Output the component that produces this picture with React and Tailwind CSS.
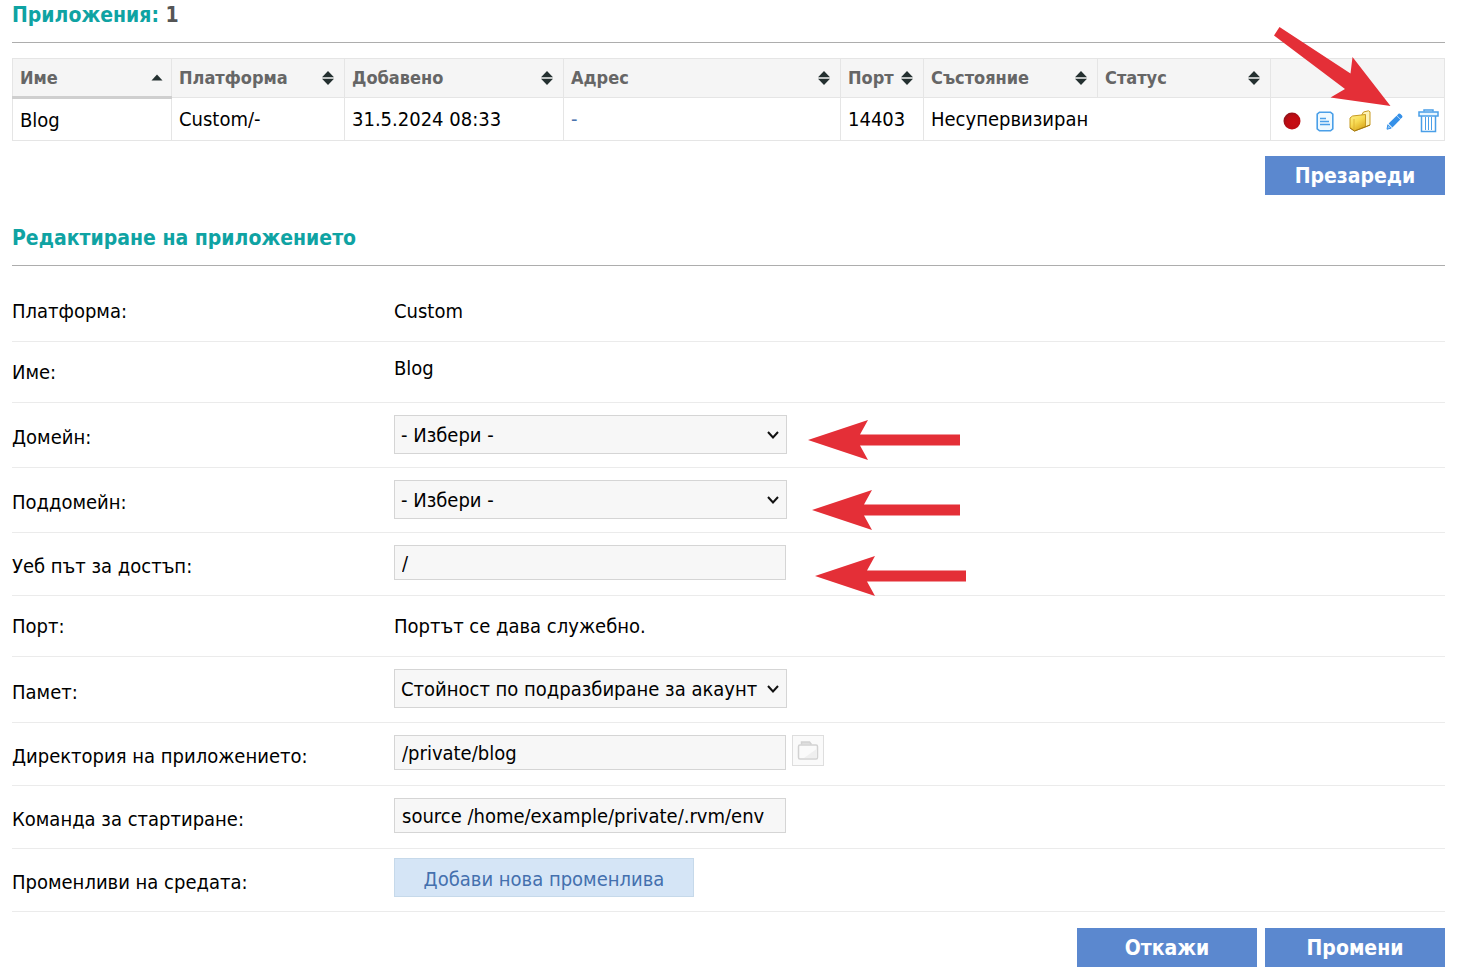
import React, { useState } from 'react';

const columns = [
  { label: 'Платформа', width: 'w-[173px]' },
  { label: 'Добавено', width: 'w-[219px]' },
  { label: 'Адрес', width: '' },
  { label: 'Порт', width: 'w-[83px]' },
  { label: 'Състояние', width: 'w-[174px]' },
  { label: 'Статус', width: 'w-[173px]' },
];

const SortIcon = () => (
  <svg width="12" height="14" viewBox="0 0 12 14" fill="#243030" className="shrink-0" aria-hidden="true">
    <path d="M6 0 12 6.300H0zM0 7.700h12L6 14z" />
  </svg>
);

const SortAscIcon = () => (
  <svg width="12" height="14" viewBox="0 0 12 14" fill="#243030" className="shrink-0" aria-hidden="true">
    <path d="M6 3.500 11.500 9.500H.5z" />
  </svg>
);

const StatusIcon = () => (
  <svg width="18" height="18" viewBox="0 0 18 18" className="block">
    <defs>
      <radialGradient id="status-red" cx="60%" cy="60%" r="60%">
        <stop offset="0" stopColor="#c90d14" />
        <stop offset="0.7" stopColor="#bd0c13" />
        <stop offset="1" stopColor="#96131a" />
      </radialGradient>
    </defs>
    <circle cx="9" cy="9" r="8.500" fill="url(#status-red)" />
  </svg>
);

const LogIcon = () => (
  <svg width="18" height="21" viewBox="0 0 18 21" fill="none" stroke="#4a9fe8" className="block">
    <path d="M3.500 1.200h11l2.300 2v14.600l-2.300 2h-11l-2.300-2V3.200z" strokeWidth="1.600" fill="#eef9ff" />
    <path d="M4 7.500h6M4 10.500h9M4 13.500h10" strokeWidth="1.500" />
  </svg>
);

const FolderIcon = () => (
  <svg width="22" height="22" viewBox="0 0 22 22" className="block">
    <defs>
      <linearGradient id="folder-gold" x1="0" y1="0" x2="0.6" y2="1">
        <stop offset="0" stopColor="#fdf08c" />
        <stop offset="0.5" stopColor="#f8dc55" />
        <stop offset="1" stopColor="#dba91c" />
      </linearGradient>
    </defs>
    <path d="M13 4.500 14.500 2 19.500.8l1.500 1V15l-4.500 2z" fill="#fdf3b8" stroke="#c79a22" />
    <path d="M1 8 3.500 6 16.500 4.500v12.500L5.500 21 1 18z" fill="url(#folder-gold)" stroke="#c79a22" />
    <path d="M5 9v11.500" stroke="#dfb437" />
    <path d="M1 18l4.500 3L21 15" fill="none" stroke="#a3770f" />
  </svg>
);

const EditIcon = () => (
  <svg width="17" height="17" viewBox="0 0 17 17" fill="#3590e8" className="block">
    <path d="M12.500.8q1-.8 2 .1l1.500 1.500q1 1 .1 2l-1.600 1.500-3.600-3.500z" />
    <path d="M10.600 2.700l3.700 3.700-7.900 8-3.800-3.800z" />
    <path d="M1.900 11.700l3.400 3.400L1 16.200z" fill="#8cc4f6" stroke="#3590e8" />
  </svg>
);

const TrashIcon = () => (
  <svg width="21" height="24" viewBox="0 0 21 24" fill="none" stroke="#4a9fe8" className="block">
    <path d="M6 2.500V1h9v1.500" strokeWidth="1.500" />
    <path d="M1 3h19v4H1z" strokeWidth="1.500" fill="#e6f5ff" />
    <path d="M3.500 7v15.500h14V7" strokeWidth="1.500" />
    <path d="M7.500 8v13M10.500 8v13M13.500 8v13" strokeWidth="1" />
  </svg>
);

const BrowseIcon = () => (
  <svg width="22" height="19" viewBox="0 0 22 19" fill="none" stroke="#d2d2d2" strokeWidth="1.500" className="block">
    <path d="M4.500 3.500V1h8l2 2.500" fill="#dedede" />
    <rect x="1.500" y="4" width="19" height="14" rx="1.500" fill="#fafafa" />
    <path d="M7 17 19.500 8v9z" fill="#efefef" stroke="none" />
  </svg>
);

const actions = [
  { title: 'Спри', Icon: StatusIcon },
  { title: 'Лог', Icon: LogIcon },
  { title: 'Файлове', Icon: FolderIcon },
  { title: 'Редактирай', Icon: EditIcon },
  { title: 'Изтрий', Icon: TrashIcon },
];

const Arrow = ({ length, className }) => (
  <svg
    width={length}
    height="40"
    className={`absolute pointer-events-none ${className}`}
    fill="#e42f37"
    aria-hidden="true"
  >
    <path d={`M0 20 60 0 52 14.500H${length}V25.500H52L60 40z`} />
  </svg>
);

const Row = ({ label, htmlFor, height = 'h-[63px]', pad = 'pt-3', children }) => (
  <div className={`flex border-b border-[#ebebeb] ${height}`}>
    <div className={`w-[382px] shrink-0 flex items-center ${htmlFor ? 'pt-1' : ''}`}>
      {htmlFor ? <label htmlFor={htmlFor}>{label}</label> : <span>{label}</span>}
    </div>
    <div className={`relative flex-1 flex items-start ${pad}`}>{children}</div>
  </div>
);

const SelectField = ({ id, options }) => (
  <div className="relative">
    <select
      id={id}
      className="block w-[393px] h-[39px] appearance-none border border-[#d5d5d5] bg-[#f7f7f7] pl-[6px] pr-6 outline-none"
    >
      {options.map((option) => (
        <option key={option}>{option}</option>
      ))}
    </select>
    <svg
      width="12"
      height="8"
      viewBox="0 0 12 8"
      className="absolute right-2 top-4 pointer-events-none"
      fill="none"
      stroke="#111"
      strokeWidth="2"
      aria-hidden="true"
    >
      <path d="M1 1l5 5.500L11 1" />
    </svg>
  </div>
);

const TextField = ({ id, value, onChange }) => (
  <input
    id={id}
    name={id}
    type="text"
    value={value}
    onChange={onChange}
    className="block w-[392px] h-[35px] border border-[#d5d5d5] bg-[#f7f7f7] px-[7px] pt-px outline-none"
  />
);

const PrimaryButton = ({ children, type = 'button' }) => (
  <button
    type={type}
    className="w-[180px] h-[39px] bg-[#5b88cf] text-white text-[21px] font-bold hover:bg-[#4a78c0]"
  >
    {children}
  </button>
);

const SectionTitle = ({ children }) => (
  <h2 className="h-[43px] border-b border-[#adadad] text-[21px] font-bold text-[#0fa3a3] leading-[30px]">
    {children}
  </h2>
);

const App = () => {
  const [form, setForm] = useState({
    path: '/',
    directory: '/private/blog',
    command: 'source /home/example/private/.rvm/env',
  });

  const handleChange = (e) => {
    setForm({ ...form, [e.target.name]: e.target.value });
  };

  return (
    <div className="bg-white pl-3 pr-[15px] pb-3 text-black text-[20px] leading-7 font-['DejaVu_Sans_Condensed','Noto_Sans',sans-serif]">
      <SectionTitle>
        Приложения: <span className="text-[#555]">1</span>
      </SectionTitle>

      <div className="relative mt-[15px]">
        <table className="w-full table-fixed border-collapse">
          <thead>
            <tr className="h-[39px] bg-[#f5f5f5] text-[#666] text-[18px]">
              <th className="w-[159px] border border-[#e5e5e5] border-b-[3px] border-b-[#cfcfcf] p-0 pl-[7px] pr-2">
                <div className="flex items-center justify-between">
                  Име
                  <SortAscIcon />
                </div>
              </th>
              {columns.map((column) => (
                <th key={column.label} className={`border border-[#e5e5e5] p-0 pl-[7px] pr-[10px] ${column.width}`}>
                  <div className="flex items-center justify-between">
                    {column.label}
                    <SortIcon />
                  </div>
                </th>
              ))}
              <th className="w-[174px] border border-[#e5e5e5] p-0"></th>
            </tr>
          </thead>
          <tbody>
            <tr className="h-[43px]">
              <td className="border border-[#e5e5e5] px-[7px]">Blog</td>
              <td className="border border-[#e5e5e5] px-[7px]">Custom/-</td>
              <td className="border border-[#e5e5e5] px-[7px]">31.5.2024 08:33</td>
              <td className="border border-[#e5e5e5] px-[7px]">
                <a href="#" className="text-[#4a74ad]">-</a>
              </td>
              <td className="border border-[#e5e5e5] px-[7px]">14403</td>
              <td className="border border-[#e5e5e5] border-r-0 px-[7px] whitespace-nowrap">Несупервизиран</td>
              <td className="border border-[#e5e5e5] border-l-0 px-[7px]"></td>
              <td className="border border-[#e5e5e5] p-0 pl-3 pr-[5px] pt-1">
                <div className="flex items-center justify-between">
                  {actions.map(({ title, Icon }) => (
                    <button key={title} type="button" title={title} aria-label={title}>
                      <Icon />
                    </button>
                  ))}
                </div>
              </td>
            </tr>
          </tbody>
        </table>
        <svg
          width="118"
          height="80"
          viewBox="0 0 118 80"
          fill="#e42f37"
          className="absolute right-[54px] -top-8 pointer-events-none"
          aria-hidden="true"
        >
          <path d="M6.500 1 77.500 47.500 79.500 31 117.500 80 57.500 71.500 72 63 1 9.500z" />
        </svg>
      </div>

      <div className="flex justify-end mt-[15px]">
        <PrimaryButton>Презареди</PrimaryButton>
      </div>

      <form className="mt-7" onSubmit={(e) => e.preventDefault()}>
        <SectionTitle>Редактиране на приложението</SectionTitle>

        <div className="pt-[15px]">
          <Row label="Платформа:" height="h-[61px]" pad="pt-4">Custom</Row>
          <Row label="Име:" height="h-[61px]">Blog</Row>
          <Row label="Домейн:" htmlFor="domain" height="h-[65px]">
            <SelectField id="domain" options={['- Избери -']} />
            <Arrow length={152} className="left-[414px] top-[17px]" />
          </Row>
          <Row label="Поддомейн:" htmlFor="subdomain" height="h-[65px]">
            <SelectField id="subdomain" options={['- Избери -']} />
            <Arrow length={148} className="left-[418px] top-[22px]" />
          </Row>
          <Row label="Уеб път за достъп:" htmlFor="path">
            <TextField id="path" value={form.path} onChange={handleChange} />
            <Arrow length={151} className="left-[421px] top-[23px]" />
          </Row>
          <Row label="Порт:" height="h-[61px]" pad="pt-4">Портът се дава служебно.</Row>
          <Row label="Памет:" htmlFor="memory" height="h-[66px]">
            <SelectField id="memory" options={['Стойност по подразбиране за акаунт']} />
          </Row>
          <Row label="Директория на приложението:" htmlFor="directory">
            <TextField id="directory" value={form.directory} onChange={handleChange} />
            <button
              type="button"
              aria-label="Избери директория"
              className="ml-[6px] w-8 h-[31px] flex items-center justify-center border border-[#dedede] bg-[#fafafa]"
            >
              <BrowseIcon />
            </button>
          </Row>
          <Row label="Команда за стартиране:" htmlFor="command">
            <TextField id="command" value={form.command} onChange={handleChange} />
          </Row>
          <Row label="Променливи на средата:" htmlFor="add-variable" pad="pt-[9px]">
            <button
              id="add-variable"
              type="button"
              className="w-[300px] h-[39px] pt-[2px] border border-[#c6d9ea] bg-[#d5e5f6] text-[#4470ae]"
            >
              Добави нова променлива
            </button>
          </Row>
        </div>

        <div className="flex justify-end gap-2 mt-4">
          <PrimaryButton>Откажи</PrimaryButton>
          <PrimaryButton type="submit">Промени</PrimaryButton>
        </div>
      </form>
    </div>
  );
};

export default App;
